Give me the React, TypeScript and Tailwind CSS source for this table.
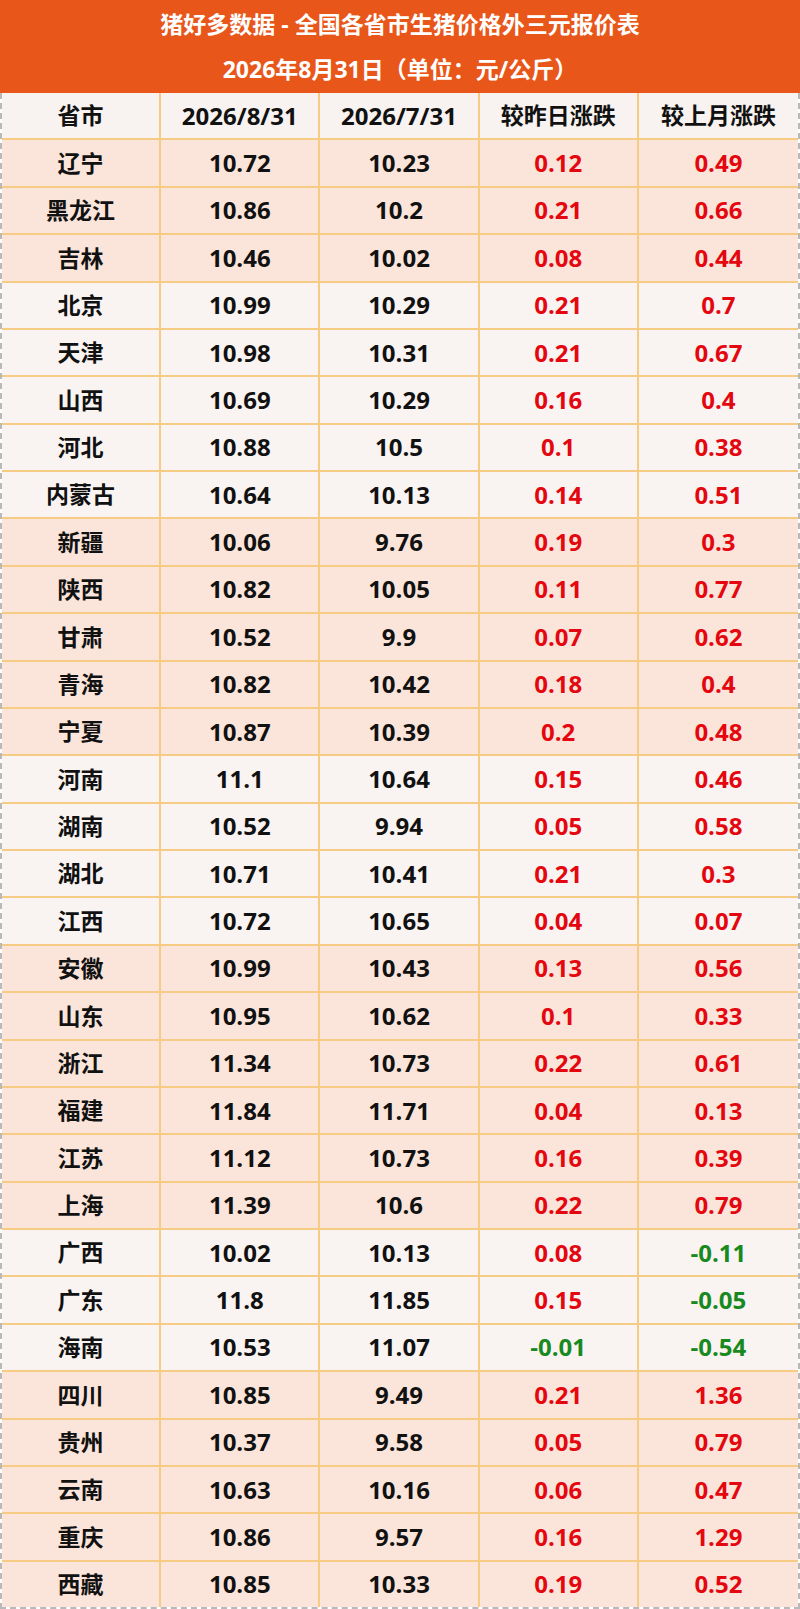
import React from 'react';

type Row = {
  name: string;
  today: string;
  lastMonth: string;
  dayDiff: string;
  monthDiff: string;
  peach: boolean;
};

// 地区分组：true = 浅橙底色
const GROUPS: {peach: boolean; rows: string[][]}[] = [
  {
    peach: true,
    rows: [
      ['辽宁', '10.72', '10.23', '0.12', '0.49'],
      ['黑龙江', '10.86', '10.2', '0.21', '0.66'],
      ['吉林', '10.46', '10.02', '0.08', '0.44']
    ]
  },
  {
    peach: false,
    rows: [
      ['北京', '10.99', '10.29', '0.21', '0.7'],
      ['天津', '10.98', '10.31', '0.21', '0.67'],
      ['山西', '10.69', '10.29', '0.16', '0.4'],
      ['河北', '10.88', '10.5', '0.1', '0.38'],
      ['内蒙古', '10.64', '10.13', '0.14', '0.51']
    ]
  },
  {
    peach: true,
    rows: [
      ['新疆', '10.06', '9.76', '0.19', '0.3'],
      ['陕西', '10.82', '10.05', '0.11', '0.77'],
      ['甘肃', '10.52', '9.9', '0.07', '0.62'],
      ['青海', '10.82', '10.42', '0.18', '0.4'],
      ['宁夏', '10.87', '10.39', '0.2', '0.48']
    ]
  },
  {
    peach: false,
    rows: [
      ['河南', '11.1', '10.64', '0.15', '0.46'],
      ['湖南', '10.52', '9.94', '0.05', '0.58'],
      ['湖北', '10.71', '10.41', '0.21', '0.3'],
      ['江西', '10.72', '10.65', '0.04', '0.07']
    ]
  },
  {
    peach: true,
    rows: [
      ['安徽', '10.99', '10.43', '0.13', '0.56'],
      ['山东', '10.95', '10.62', '0.1', '0.33'],
      ['浙江', '11.34', '10.73', '0.22', '0.61'],
      ['福建', '11.84', '11.71', '0.04', '0.13'],
      ['江苏', '11.12', '10.73', '0.16', '0.39'],
      ['上海', '11.39', '10.6', '0.22', '0.79']
    ]
  },
  {
    peach: false,
    rows: [
      ['广西', '10.02', '10.13', '0.08', '-0.11'],
      ['广东', '11.8', '11.85', '0.15', '-0.05'],
      ['海南', '10.53', '11.07', '-0.01', '-0.54']
    ]
  },
  {
    peach: true,
    rows: [
      ['四川', '10.85', '9.49', '0.21', '1.36'],
      ['贵州', '10.37', '9.58', '0.05', '0.79'],
      ['云南', '10.63', '10.16', '0.06', '0.47'],
      ['重庆', '10.86', '9.57', '0.16', '1.29'],
      ['西藏', '10.85', '10.33', '0.19', '0.52']
    ]
  }
];

const ROWS: Row[] = GROUPS.flatMap((g) =>
  g.rows.map(([name, today, lastMonth, dayDiff, monthDiff]) => ({
    name,
    today,
    lastMonth,
    dayDiff,
    monthDiff,
    peach: g.peach
  }))
);

const HEADERS = ['省市', '2026/8/31', '2026/7/31', '较昨日涨跌', '较上月涨跌'];

const diffColor = (v: string) => (v.startsWith('-') ? 'text-[#17891f]' : 'text-[#e4070f]');

const Cell = ({children, last, className = ''}: {children: React.ReactNode; last?: boolean; className?: string}) => (
  <div
    className={`flex items-center justify-center border-[#f6cc84] ${
      last ? '' : 'border-r-2'
    } ${className}`}
  >
    {children}
  </div>
);

export default function App() {
  return (
    <div
      className="w-[800px] h-[1609px] flex flex-col bg-white font-bold text-[#111]"
      style={{fontFamily: '"Open Sans", "Noto Sans CJK SC", sans-serif'}}
    >
      {/* 标题 */}
      <div className="h-[93px] shrink-0 bg-[#e8561a] text-white text-[23px] leading-none flex flex-col">
        <div className="flex-1 flex items-center justify-center pt-[2px]">猪好多数据 - 全国各省市生猪价格外三元报价表</div>
        <div className="flex-1 flex items-center justify-center pb-[1px]">2026年8月31日（单位：元/公斤）</div>
      </div>

      {/* 表格 */}
      <div className="flex-1 flex flex-col border-x-2 border-b-2 border-dashed border-[#b9b9b9]">
        <div className="flex-1 grid grid-cols-5 bg-[#f8f3f0] border-b-2 border-[#f6cc84] text-[24px]">
          {HEADERS.map((h, i) => (
            <Cell key={h} last={i === HEADERS.length - 1} className={i === 0 || i > 2 ? 'text-[23px]' : ''}>
              {h}
            </Cell>
          ))}
        </div>
        {ROWS.map((r, idx) => (
          <div
            key={r.name}
            className={`flex-1 grid grid-cols-5 text-[24px] border-[#f6cc84] ${
              idx === ROWS.length - 1 ? '' : 'border-b-2'
            } ${r.peach ? 'bg-[#fbe5da]' : 'bg-[#f9f4f1]'}`}
          >
            <Cell className="text-[23px]">{r.name}</Cell>
            <Cell>{r.today}</Cell>
            <Cell>{r.lastMonth}</Cell>
            <Cell className={diffColor(r.dayDiff)}>{r.dayDiff}</Cell>
            <Cell last className={diffColor(r.monthDiff)}>
              {r.monthDiff}
            </Cell>
          </div>
        ))}
      </div>
    </div>
  );
}
